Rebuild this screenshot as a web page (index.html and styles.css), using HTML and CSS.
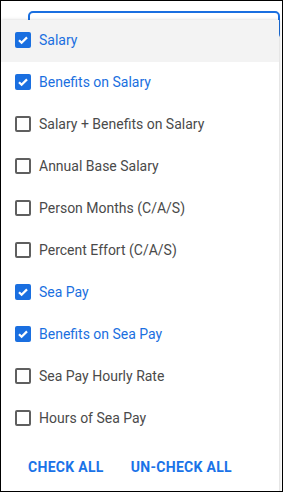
FILE: index.html
```html
<!DOCTYPE html>
<html>
<head>
<meta charset="utf-8">
<link rel="stylesheet" href="styles.css">
</head>
<body>
<div class="frame">
  <div class="field"></div>
  <div class="panel">
    <ul class="list">
      <li class="item active checked"><span class="box"><svg viewBox="0 0 16 16"><path d="M4 8.2l2.6 2.6L12 5.4"/></svg></span><span class="label">Salary</span></li>
      <li class="item checked"><span class="box"><svg viewBox="0 0 16 16"><path d="M4 8.2l2.6 2.6L12 5.4"/></svg></span><span class="label">Benefits on Salary</span></li>
      <li class="item"><span class="box"></span><span class="label">Salary + Benefits on Salary</span></li>
      <li class="item"><span class="box"></span><span class="label">Annual Base Salary</span></li>
      <li class="item"><span class="box"></span><span class="label">Person Months (C/A/S)</span></li>
      <li class="item"><span class="box"></span><span class="label">Percent Effort (C/A/S)</span></li>
      <li class="item checked"><span class="box"><svg viewBox="0 0 16 16"><path d="M4 8.2l2.6 2.6L12 5.4"/></svg></span><span class="label">Sea Pay</span></li>
      <li class="item checked"><span class="box"><svg viewBox="0 0 16 16"><path d="M4 8.2l2.6 2.6L12 5.4"/></svg></span><span class="label">Benefits on Sea Pay</span></li>
      <li class="item"><span class="box"></span><span class="label">Sea Pay Hourly Rate</span></li>
      <li class="item"><span class="box"></span><span class="label">Hours of Sea Pay</span></li>
    </ul>
    <div class="actions">
      <button class="btn">CHECK ALL</button>
      <button class="btn">UN-CHECK ALL</button>
    </div>
  </div>
</div>
</body>
</html>
```
FILE: styles.css
```css
html, body {
  margin: 0;
  padding: 0;
  background: #fff;
}
.frame {
  position: relative;
  width: 283px;
  height: 492px;
  box-sizing: border-box;
  border: 1px solid #000;
  background: #fff;
  overflow: hidden;
  font-family: Roboto, "Liberation Sans", sans-serif;
}
.field {
  margin: 10px 2px 0 27px;
  height: 24px;
  border: 2px solid #1a6fe0;
  border-radius: 5px;
}
.panel {
  position: absolute;
  top: 19px;
  left: 0;
  width: 278px;
  background: #fff;
  box-shadow: 0 0 4px rgba(0,0,0,0.12), 1px 0 2px rgba(0,0,0,0.08);
}
.list {
  list-style: none;
  margin: 0;
  padding: 0;
}
.item {
  display: flex;
  align-items: center;
  gap: 8px;
  height: 42px;
  padding-left: 14px;
  padding-bottom: 2px;
  box-sizing: border-box;
  font-size: 14px;
  color: #4a4a4a;
}
.item.active {
  background: #f3f3f3;
}
.item.checked {
  color: #1a6fe0;
}
.box {
  width: 16px;
  height: 16px;
  box-sizing: border-box;
  border: 2px solid #5f5f5f;
  border-radius: 2px;
  display: flex;
  align-items: center;
  justify-content: center;
  flex: none;
}
.item.checked .box {
  border: none;
  background: #1a6fe0;
}
.box svg {
  width: 16px;
  height: 16px;
}
.box path {
  fill: none;
  stroke: #fff;
  stroke-width: 2.2;
}
.actions {
  display: flex;
  gap: 11px;
  padding: 11px 0 10px 19px;
}
.btn {
  background: none;
  border: none;
  padding: 8px 8px;
  font-family: Roboto, "Liberation Sans", sans-serif;
  font-size: 14px;
  font-weight: 700;
  letter-spacing: 0.3px;
  color: #1a73e8;
  cursor: pointer;
}
```
